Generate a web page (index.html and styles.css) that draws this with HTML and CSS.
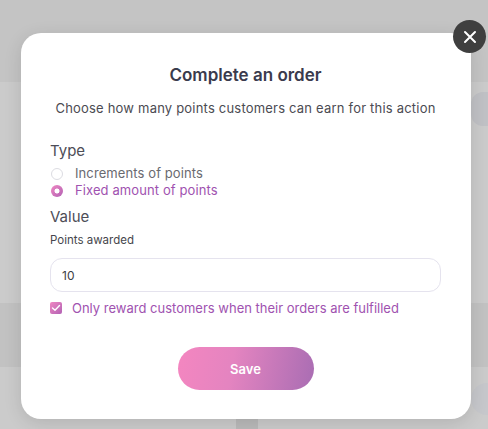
FILE: index.html
```html
<!DOCTYPE html>
<html lang="en">
<head>
<meta charset="utf-8">
<title>Complete an order</title>
<link rel="stylesheet" href="styles.css">
</head>
<body>
<div class="page">
  <div class="band band-top"></div>
  <div class="band band-mid">
    <div class="pill"></div>
  </div>
  <div class="band band-dark"></div>
  <div class="band band-low">
    <div class="ring"></div>
    <div class="tab"></div>
  </div>
</div>

<div class="modal">
  <button class="close" aria-label="Close">
    <svg width="14" height="14" viewBox="0 0 14 14"><path d="M2 2 L12 12 M12 2 L2 12" stroke="#fff" stroke-width="2" stroke-linecap="round"/></svg>
  </button>
  <h1 class="title">Complete an order</h1>
  <p class="subtitle">Choose how many points customers can earn for this action</p>

  <div class="section-label">Type</div>
  <div class="options">
    <label class="option">
      <span class="radio"></span>
      <span>Increments of points</span>
    </label>
    <label class="option option-on">
      <span class="radio radio-on"></span>
      <span>Fixed amount of points</span>
    </label>
  </div>

  <div class="section-label value-label">Value</div>
  <div class="field-label">Points awarded</div>
  <div class="input">10</div>

  <label class="check-row">
    <span class="checkbox">
      <svg width="10" height="8" viewBox="0 0 10 8"><path d="M1.5 4 L4 6.3 L8.5 1.5" fill="none" stroke="#fff" stroke-width="1.4" stroke-linecap="round" stroke-linejoin="round"/></svg>
    </span>
    <span>Only reward customers when their orders are fulfilled</span>
  </label>

  <div class="actions">
    <button class="save">Save</button>
  </div>
</div>
</body>
</html>
```

FILE: styles.css
```css
* { box-sizing: border-box; }
html, body { margin: 0; padding: 0; }
body {
  width: 488px;
  height: 429px;
  overflow: hidden;
  position: relative;
  font-family: "Inter", "Open Sans", sans-serif;
  background: #cbcbcb;
}
.page { display: flex; flex-direction: column; height: 429px; }
.band { position: relative; }
.band-top { height: 82px; background: #c4c4c4; }
.band-mid { height: 221px; background: #cbcbcb; padding-top: 10px; display: flex; justify-content: flex-end; }
.pill { width: 30px; height: 34px; border-radius: 12px; background: #c0c1c5; margin-right: -13px; }
.band-dark { height: 64px; background: #c2c2c2; }
.band-low { flex: 1; background: #cbcbcb; display: flex; flex-direction: column; align-items: flex-end; }
.ring { width: 32px; height: 32px; border-radius: 50%; background: #c6c7cb; margin-top: 16px; margin-right: -15px; }
.tab { align-self: flex-start; margin-left: 236px; margin-top: auto; width: 22px; height: 11px; background: #bababa; }

.modal {
  position: absolute;
  left: 21px;
  top: 33px;
  width: 450px;
  height: 386px;
  background: #fff;
  border-radius: 20px;
  box-shadow: 0 4px 18px rgba(0,0,0,0.12);
  padding: 29px 30px 0 29px;
  color: #4a4a55;
}
.close {
  position: absolute;
  right: -15px;
  top: -13px;
  width: 33px;
  height: 33px;
  border-radius: 50%;
  border: 0;
  background: #3f3f3f;
  display: flex;
  align-items: center;
  justify-content: center;
  padding: 0;
}
.title {
  margin: 0;
  text-align: center;
  font-size: 17px;
  font-weight: 600;
  line-height: 26px;
  color: #3a3b4d;
}
.subtitle {
  margin: 11px 0 0;
  text-align: center;
  font-size: 13px;
  letter-spacing: 0.2px;
  line-height: 18px;
  color: #4b4b52;
}
.section-label {
  margin-top: 24px;
  font-size: 15px;
  line-height: 20px;
  color: #4d4d57;
}
.options { margin-top: 4px; }
.value-label { margin-top: 8px; }
.option {
  display: flex;
  align-items: center;
  gap: 12px;
  font-size: 13px;
  letter-spacing: 0.1px;
  line-height: 17px;
  color: #6a6a70;
  margin-left: 1px;
}
.option-on { color: #a052b0; }
.radio {
  width: 12px;
  height: 12px;
  border-radius: 50%;
  border: 1px solid #dcdce2;
  background: #fff;
  flex: none;
}
.radio-on {
  border: 0;
  background: radial-gradient(circle, #fff 0 2.2px, transparent 2.8px), linear-gradient(135deg, #f087c2, #b262b4);
}
.field-label {
  margin-top: 5px;
  font-size: 11.5px;
  line-height: 16px;
  color: #46464c;
}
.input {
  margin-top: 10px;
  height: 34px;
  border: 1px solid #e5e3ee;
  border-radius: 12px;
  padding: 0 11px;
  display: flex;
  align-items: center;
  font-size: 12px;
  color: #3d3d44;
}
.check-row {
  display: flex;
  align-items: center;
  gap: 10px;
  margin-top: 7px;
  font-size: 13px;
  line-height: 18px;
  color: #a052b0;
}
.checkbox {
  width: 12px;
  height: 12px;
  border-radius: 2px;
  background: linear-gradient(135deg, #f087c2, #b262b4);
  display: flex;
  align-items: center;
  justify-content: center;
  flex: none;
}
.actions {
  display: flex;
  justify-content: center;
  margin-top: 30px;
}
.save {
  width: 136px;
  height: 43px;
  border: 0;
  border-radius: 22px;
  background: linear-gradient(100deg, #f486c0 0%, #e484c0 40%, #a96db3 100%);
  color: #fff;
  font-family: inherit;
  font-size: 13px;
  font-weight: 600;
}
```
